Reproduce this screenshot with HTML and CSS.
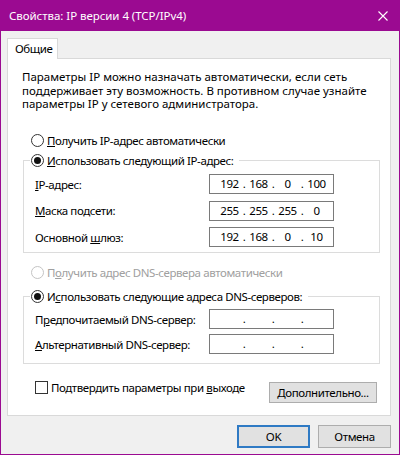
FILE: index.html
```html
<!DOCTYPE html>
<html lang="ru">
<head>
<meta charset="utf-8">
<title>Свойства: IP версии 4 (TCP/IPv4)</title>
<link rel="stylesheet" href="styles.css">
</head>
<body>
<div class="window">
  <div class="titlebar">
    <span class="title">Свойства: IP версии 4 (TCP/IPv4)</span>
    <svg class="close" width="10" height="10" viewBox="0 0 10 10"><path d="M0.5 0.5L9.5 9.5M9.5 0.5L0.5 9.5" stroke="#fff" stroke-width="1.1" fill="none"/></svg>
  </div>
  <div class="body">
    <div class="tabstrip"><div class="tab">Общие</div></div>
    <div class="panel">
      <p class="intro">Параметры IP можно назначать автоматически, если сеть<br>поддерживает эту возможность. В противном случае узнайте<br>параметры IP у сетевого администратора.</p>

      <div class="option option-ip-auto"><span class="radio"></span><span><u>П</u>олучить IP-адрес автоматически</span></div>

      <fieldset class="group group-ip">
        <legend class="option"><span class="radio checked"></span><span><u>И</u>спользовать следующий IP-адрес:</span></legend>
        <div class="field"><span class="label"><u>I</u>P-адрес:</span>
          <div class="ipbox"><span class="oct">192</span><span class="dot">.</span><span class="oct">168</span><span class="dot">.</span><span class="oct">0</span><span class="dot">.</span><span class="oct">100</span></div></div>
        <div class="field"><span class="label"><u>М</u>аска подсети:</span>
          <div class="ipbox"><span class="oct">255</span><span class="dot">.</span><span class="oct">255</span><span class="dot">.</span><span class="oct">255</span><span class="dot">.</span><span class="oct">0</span></div></div>
        <div class="field"><span class="label">Основной <u>ш</u>люз:</span>
          <div class="ipbox"><span class="oct">192</span><span class="dot">.</span><span class="oct">168</span><span class="dot">.</span><span class="oct">0</span><span class="dot">.</span><span class="oct">10</span></div></div>
      </fieldset>

      <div class="option option-dns-auto disabled"><span class="radio"></span><span>П<u>о</u>лучить адрес DNS-сервера автоматически</span></div>

      <fieldset class="group group-dns">
        <legend class="option"><span class="radio checked"></span><span>И<u>с</u>пользовать следующие адреса DNS-серверов:</span></legend>
        <div class="field"><span class="label">П<u>р</u>едпочитаемый DNS-сервер:</span>
          <div class="ipbox"><span class="oct"></span><span class="dot">.</span><span class="oct"></span><span class="dot">.</span><span class="oct"></span><span class="dot">.</span><span class="oct"></span></div></div>
        <div class="field"><span class="label"><u>А</u>льтернативный DNS-сервер:</span>
          <div class="ipbox"><span class="oct"></span><span class="dot">.</span><span class="oct"></span><span class="dot">.</span><span class="oct"></span><span class="dot">.</span><span class="oct"></span></div></div>
      </fieldset>

      <div class="bottomrow">
        <div class="check"><span class="checkbox"></span><span>Подтвердить параметры при <u>в</u>ыходе</span></div>
        <button class="btn btn-advanced"><u>Д</u>ополнительно...</button>
      </div>
    </div>
    <div class="footer">
      <button class="btn btn-default">OK</button>
      <button class="btn">Отмена</button>
    </div>
  </div>
</div>
</body>
</html>
```
FILE: styles.css
```css
html, body {
  margin: 0;
  padding: 0;
  background: #f0f0f0;
}

body {
  font-family: "Noto Sans", "Open Sans", sans-serif;
  font-size: 11.5px;
  letter-spacing: -0.4px;
  color: #000;
}

u {
  text-decoration: underline;
  text-underline-offset: 1px;
  text-decoration-thickness: 1px;
}

.window {
  width: 400px;
  height: 455px;
  box-sizing: border-box;
  border: 1px solid #9b0a91;
  border-top: 0;
  background: #f0f0f0;
  display: flex;
  flex-direction: column;
}

.titlebar {
  height: 31px;
  flex-shrink: 0;
  background: #9b0a91;
  color: #fff;
  display: flex;
  align-items: center;
  justify-content: space-between;
  padding: 0 11px 0 8px;
}

.title {
  line-height: 16px;
  letter-spacing: -0.05px;
}

.close {
  display: block;
}

.body {
  flex: 1;
  display: flex;
  flex-direction: column;
  padding: 7px 8px 0 6px;
}

.tabstrip {
  height: 20px;
  display: flex;
}

.tab {
  position: relative;
  z-index: 1;
  width: 51px;
  height: 21px;
  box-sizing: border-box;
  border: 1px solid #d9d9d9;
  border-bottom: 0;
  background: #fff;
  padding-left: 7px;
  line-height: 19px;
}

.panel {
  width: 384px;
  height: 358px;
  box-sizing: border-box;
  border: 1px solid #d9d9d9;
  background: #fff;
  padding: 0 13px 0 14px;
}

.intro {
  margin: 11px 0 0;
  line-height: 13.5px;
  white-space: nowrap;
  letter-spacing: 0;
}

.option {
  display: flex;
  align-items: center;
  height: 15px;
  line-height: 15px;
  white-space: nowrap;
}

.option-ip-auto {
  margin: 22px 0 0 9px;
}

.option-dns-auto {
  margin: 12px 0 0 9px;
}

.radio {
  width: 13px;
  height: 13px;
  box-sizing: border-box;
  border: 1px solid #333;
  border-radius: 50%;
  background: #fff;
  margin-right: 3px;
  flex-shrink: 0;
  display: flex;
  align-items: center;
  justify-content: center;
}

.radio.checked::after {
  content: "";
  width: 7px;
  height: 7px;
  border-radius: 50%;
  background: #111;
}

.disabled {
  color: #a0a0a0;
}

.disabled .radio {
  border-color: #c4c4c4;
}

.group {
  width: 357px;
  box-sizing: border-box;
  margin: 0 0 0 1px;
  border: 1px solid #dcdcdc;
  min-inline-size: 0;
}

.group legend {
  padding: 0 6px 0 1px;
  margin-left: -5px;
}

.group-ip {
  margin-top: 5.5px;
  padding: 6px 0 5px 11px;
}

.group-dns {
  margin-top: 9px;
  padding: 5px 0 9px 11px;
}

.field {
  display: flex;
  align-items: center;
  height: 20px;
}

.group-ip .field + .field {
  margin-top: 6.5px;
}

.group-dns .field + .field {
  margin-top: 5px;
}

.label {
  width: 174px;
  white-space: nowrap;
}

.ipbox {
  width: 125px;
  height: 20px;
  box-sizing: border-box;
  border: 1px solid #7a7a7a;
  background: #fff;
  display: flex;
  align-items: center;
  padding-left: 8px;
  line-height: 18px;
}

.oct {
  width: 23px;
  text-align: center;
}

.dot {
  width: 6px;
  text-align: center;
}

.bottomrow {
  margin-top: 16px;
  padding-left: 13px;
  display: flex;
  justify-content: space-between;
  align-items: flex-start;
}

.check {
  display: flex;
  align-items: center;
  height: 15px;
  line-height: 15px;
  white-space: nowrap;
}

.checkbox {
  width: 13px;
  height: 13px;
  box-sizing: border-box;
  border: 1px solid #333;
  background: #fff;
  margin-right: 3px;
}

.btn {
  font: inherit;
  letter-spacing: inherit;
  color: #000;
  background: #e1e1e1;
  border: 1px solid #adadad;
  border-radius: 0;
  padding: 0;
  margin: 0;
  box-sizing: border-box;
  height: 23px;
  width: 73px;
  line-height: 19px;
  text-align: center;
}

.btn-advanced {
  width: 108px;
  height: 21px;
  margin-top: 2px;
  line-height: 17px;
}

.btn-default {
  border: 2px solid #2f7ac4;
}

.footer {
  display: flex;
  justify-content: flex-end;
  gap: 8px;
  margin-top: 9px;
}
```
